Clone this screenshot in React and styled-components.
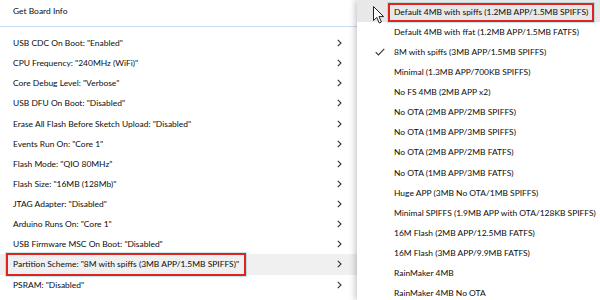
import React from "react";
import styled, { createGlobalStyle } from "styled-components";

const Global = createGlobalStyle`
  html, body { margin: 0; padding: 0; background: #fff; }
  body { font-family: "Lato", sans-serif; }
`;

const Page = styled.div`
  width: 600px;
  height: 300px;
  display: flex;
  overflow: hidden;
  background: #fff;
  font-family: "Lato", sans-serif;
  font-size: 8.45px;
  color: #0c0c0c;
`;

const Menu = styled.div`
  width: 357px;
  flex: none;
  display: flex;
  flex-direction: column;
`;

const TopItem = styled.div`
  height: 22px;
  display: flex;
  align-items: center;
  padding-left: 13px;
`;

const Separator = styled.div`
  height: 1px;
  background: #c9dcf2;
  margin: 4px 0 6px;
`;

const Row = styled.div`
  height: 20.14px;
  flex: none;
  display: flex;
  align-items: center;
  justify-content: space-between;
  padding: 0 15px 0 13px;
  background: ${(p) => (p.$active ? "#f0f0f0" : "transparent")};
  white-space: nowrap;
`;

const Marked = styled.span`
  display: inline-block;
  border: 2px solid #e12222;
  box-shadow: 0 0 0 1px rgba(150, 205, 205, 0.55);
  padding: ${(p) => p.$pad};
  margin-left: ${(p) => p.$shift};
  line-height: 13px;
`;

const Chevron = () => (
  <svg width="5" height="8" viewBox="0 0 5 8" fill="none">
    <path d="M0.8 0.8 L4 4 L0.8 7.2" stroke="#333" strokeWidth="1.1" />
  </svg>
);

const Dropdown = styled.div`
  position: relative;
  flex: 1;
  background: #fff;
  box-shadow: -2px 0 6px rgba(0, 0, 0, 0.22);
  padding-top: 2px;
  display: flex;
  flex-direction: column;
`;

const Option = styled.div`
  height: 20.07px;
  flex: none;
  display: flex;
  align-items: center;
  white-space: nowrap;
  background: ${(p) => (p.$hover ? "#e8e8e8" : "transparent")};
  margin-top: ${(p) => (p.$first ? "-2px" : "0")};
  padding-top: ${(p) => (p.$first ? "2px" : "0")};
`;

const Gutter = styled.span`
  width: 37px;
  flex: none;
  display: flex;
  align-items: center;
  padding-left: 18px;
  box-sizing: border-box;
`;

const Cursor = styled.svg`
  position: absolute;
  left: 16px;
  top: 6px;
`;

const Check = () => (
  <svg width="10" height="8" viewBox="0 0 10 8" fill="none">
    <path d="M0.7 4.2 L3.4 6.9 L9.3 0.8" stroke="#333" strokeWidth="1.1" />
  </svg>
);

const menuItems = [
  'USB CDC On Boot: "Enabled"',
  'CPU Frequency: "240MHz (WiFi)"',
  'Core Debug Level: "Verbose"',
  'USB DFU On Boot: "Disabled"',
  'Erase All Flash Before Sketch Upload: "Disabled"',
  'Events Run On: "Core 1"',
  'Flash Mode: "QIO 80MHz"',
  'Flash Size: "16MB (128Mb)"',
  'JTAG Adapter: "Disabled"',
  'Arduino Runs On: "Core 1"',
  'USB Firmware MSC On Boot: "Disabled"',
  'Partition Scheme: "8M with spiffs (3MB APP/1.5MB SPIFFS)"',
  'PSRAM: "Disabled"',
];

const options = [
  "Default 4MB with spiffs (1.2MB APP/1.5MB SPIFFS)",
  "Default 4MB with ffat (1.2MB APP/1.5MB FATFS)",
  "8M with spiffs (3MB APP/1.5MB SPIFFS)",
  "Minimal (1.3MB APP/700KB SPIFFS)",
  "No FS 4MB (2MB APP x2)",
  "No OTA (2MB APP/2MB SPIFFS)",
  "No OTA (1MB APP/3MB SPIFFS)",
  "No OTA (2MB APP/2MB FATFS)",
  "No OTA (1MB APP/3MB FATFS)",
  "Huge APP (3MB No OTA/1MB SPIFFS)",
  "Minimal SPIFFS (1.9MB APP with OTA/128KB SPIFFS)",
  "16M Flash (2MB APP/12.5MB FATFS)",
  "16M Flash (3MB APP/9.9MB FATFS)",
  "RainMaker 4MB",
  "RainMaker 4MB No OTA",
];

export default function App() {
  return (
    <>
      <Global />
      <Page>
        <Menu>
          <TopItem>Get Board Info</TopItem>
          <Separator />
          {menuItems.map((t, i) => {
            const active = i === 11;
            return (
              <Row key={t} $active={active}>
                {active ? <Marked $pad="3px 5px" $shift="-7px">{t}</Marked> : <span>{t}</span>}
                <Chevron />
              </Row>
            );
          })}
        </Menu>
        <Dropdown>
          {options.map((t, i) => (
            <Option key={t} $hover={i === 0} $first={i === 0}>
              <Gutter>{i === 2 ? <Check /> : null}</Gutter>
              {i === 0 ? <Marked $pad="1px 4px" $shift="-6px">{t}</Marked> : <span>{t}</span>}
            </Option>
          ))}
          <Cursor width="12" height="18" viewBox="0 0 12 18">
            <path
              d="M0.5 0.5 L0.5 14.5 L3.8 11.4 L6.2 17 L8.4 16 L6 10.6 L10.6 10.6 Z"
              fill="#fff"
              stroke="#222"
              strokeWidth="1"
              strokeLinejoin="round"
            />
          </Cursor>
        </Dropdown>
      </Page>
    </>
  );
}
